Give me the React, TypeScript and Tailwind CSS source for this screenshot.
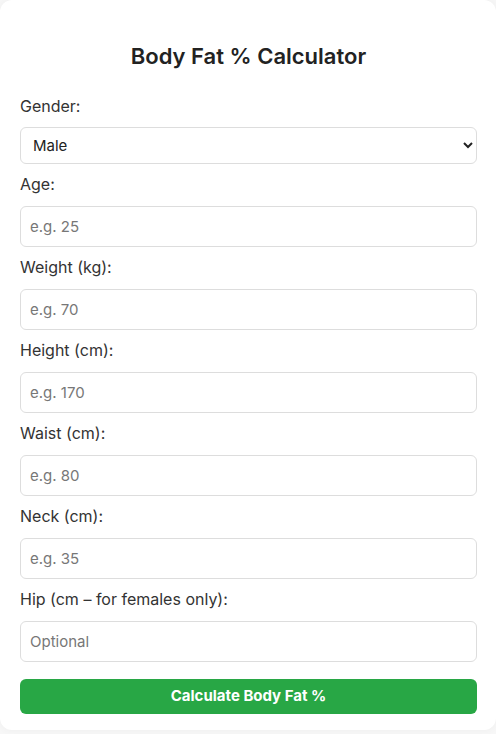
const fields = [
  { label: 'Age:', placeholder: 'e.g. 25' },
  { label: 'Weight (kg):', placeholder: 'e.g. 70' },
  { label: 'Height (cm):', placeholder: 'e.g. 170' },
  { label: 'Waist (cm):', placeholder: 'e.g. 80' },
  { label: 'Neck (cm):', placeholder: 'e.g. 35' },
  { label: 'Hip (cm – for females only):', placeholder: 'Optional' }
]

export default function App() {
  return (
    <div className="min-h-screen bg-[#f7f7f7] font-['Inter',sans-serif]">
      <div className="rounded-xl bg-white pb-4 pl-5 pr-[19px] pt-5 shadow-[0_0_8px_rgba(0,0,0,0.04)]">
        <h2 className="mb-[25px] mt-[22px] text-center text-[22px] font-semibold leading-7 text-[#222]">
          Body Fat % Calculator
        </h2>
        <label className="mb-[10px] block text-base leading-[22px] text-[#333]">Gender:</label>
        <select className="block h-[37px] w-full rounded-md border border-[#ddd] bg-white px-2 text-[15px] text-[#222]">
          <option>Male</option>
          <option>Female</option>
        </select>
        {fields.map((f) => (
          <div key={f.label}>
            <label className="mb-[11px] mt-[10px] block text-base leading-[21px] text-[#333]">{f.label}</label>
            <input
              type="number"
              placeholder={f.placeholder}
              className="block h-[41px] w-full rounded-md border border-[#ddd] px-[9px] text-[15px] text-[#222] placeholder:text-[#777] focus:outline-none"
            />
          </div>
        ))}
        <button className="mt-[17px] block h-[35px] w-full rounded-md bg-[#28a745] text-[15px] font-bold text-white">
          Calculate Body Fat %
        </button>
      </div>
    </div>
  )
}
